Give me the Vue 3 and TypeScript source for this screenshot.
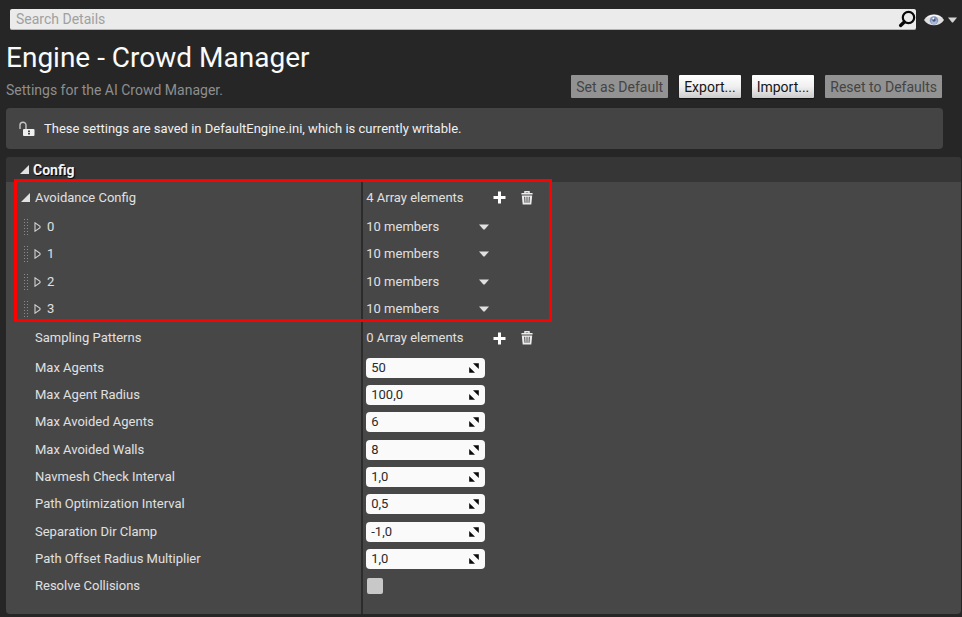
<script setup lang="ts">
import { ref } from 'vue'

interface NumberSetting {
  id: string
  label: string
  value: string
}

const search = ref('')
const members = ref<string[]>(['0', '1', '2', '3'])
const resolveCollisions = ref(false)

const settings = ref<NumberSetting[]>([
  { id: 'max-agents', label: 'Max Agents', value: '50' },
  { id: 'max-agent-radius', label: 'Max Agent Radius', value: '100,0' },
  { id: 'max-avoided-agents', label: 'Max Avoided Agents', value: '6' },
  { id: 'max-avoided-walls', label: 'Max Avoided Walls', value: '8' },
  { id: 'navmesh-check', label: 'Navmesh Check Interval', value: '1,0' },
  { id: 'path-optimization', label: 'Path Optimization Interval', value: '0,5' },
  { id: 'separation-clamp', label: 'Separation Dir Clamp', value: '-1,0' },
  { id: 'path-offset', label: 'Path Offset Radius Multiplier', value: '1,0' },
])
</script>

<template>
  <main class="page">
    <div class="toolbar">
      <div class="search">
        <input v-model="search" type="text" placeholder="Search Details" aria-label="Search Details" />
        <svg class="search-icon" width="18" height="18" viewBox="0 0 18 18" aria-hidden="true">
          <circle cx="10.5" cy="7.5" r="5.7" fill="none" stroke="#080808" stroke-width="2.2" />
          <path d="M6.3 12 2.6 15.4" stroke="#080808" stroke-width="3.4" stroke-linecap="round" />
        </svg>
      </div>
      <button class="view" type="button" aria-label="View options">
        <svg width="20" height="14" viewBox="0 0 20 14" aria-hidden="true">
          <path d="M0 7C4 -.2 16 -.2 20 7 16 14 4 14 0 7Z" fill="#dedede" />
          <path d="M2 5.4C6 .4 14 .4 18 5.4 13 2.8 7 2.8 2 5.4Z" fill="#f8f8f8" />
          <circle cx="10" cy="7.4" r="4.2" fill="#8294bd" />
          <circle cx="10" cy="8.6" r="2.8" fill="#a9b9db" />
          <circle cx="10" cy="7" r="1.7" fill="#46567f" />
          <circle cx="9.4" cy="5.4" r="1" fill="#fff" />
        </svg>
        <svg width="9" height="6" viewBox="0 0 9 6" aria-hidden="true">
          <path d="M0 .5h9L5 5.4H4Z" fill="#d4d4d4" />
        </svg>
      </button>
    </div>

    <header class="heading">
      <div class="titles">
        <h1>Engine - Crowd Manager</h1>
        <p>Settings for the AI Crowd Manager.</p>
      </div>
      <div class="actions">
        <button type="button" disabled>Set as Default</button>
        <button type="button">Export...</button>
        <button type="button">Import...</button>
        <button type="button" disabled>Reset to Defaults</button>
      </div>
    </header>

    <div class="notice">
      <svg width="16" height="16" viewBox="0 0 16 16" aria-hidden="true">
        <path d="M1 8V4.2a3 3 0 0 1 6 0V8" fill="none" stroke="#c4c4c4" stroke-width="1.4" />
        <rect x="4" y="8" width="11.5" height="7" rx="1" fill="#f0f0f0" />
        <path d="M9 9.4h2v1.5H9zM9 11.8h2v1.6H9z" fill="#444" />
      </svg>
      <span>These settings are saved in DefaultEngine.ini, which is currently writable.</span>
    </div>

    <section class="panel">
      <h2>
        <button class="section-toggle" type="button" aria-expanded="true">
          <svg width="9" height="9" viewBox="0 0 9 9" aria-hidden="true">
            <path d="M9 0v9H0Z" fill="#e2e2e2" />
          </svg>
          Config
        </button>
      </h2>

      <div class="rows">
        <div class="group">
          <div class="row array">
            <div class="name">
              <button class="toggle" type="button" aria-label="Collapse Avoidance Config">
                <svg width="9" height="9" viewBox="0 0 9 9" aria-hidden="true">
                  <path d="M9 0v9H0Z" fill="#e2e2e2" />
                </svg>
              </button>
              <span>Avoidance Config</span>
            </div>
            <div class="value">
              <span class="count">4 Array elements</span>
              <button class="icon" type="button" aria-label="Add element">
                <svg width="13" height="13" viewBox="0 0 13 13" aria-hidden="true">
                  <path d="M5 .5h3V5h4.5v3H8v4.5H5V8H.5V5H5Z" fill="#fff" />
                </svg>
              </button>
              <button class="icon" type="button" aria-label="Remove all elements">
                <svg width="12" height="14" viewBox="0 0 12 14" aria-hidden="true">
                  <path d="M.4 2.8H11.6M4 2.4V.8h4v1.6" fill="none" stroke="#ececec" stroke-width="1.5" />
                  <path d="M.8 4.5h10.4l-.9 9H1.7Z" fill="#ececec" />
                  <path d="M3.7 5.8l.3 6M6 5.8v6M8.3 5.8l-.3 6" stroke="#484848" stroke-width="1" />
                </svg>
              </button>
            </div>
          </div>

          <div v-for="item in members" :key="item" class="row">
            <div class="name element">
              <svg class="grip" width="6" height="16" viewBox="0 0 6 16" aria-hidden="true">
                <path
                  d="M1.5 0v16M4.5 0v16"
                  stroke="#8c8c8c"
                  stroke-width="1"
                  stroke-dasharray="1 2"
                />
              </svg>
              <button class="toggle" type="button" :aria-label="'Expand element ' + item">
                <svg width="7" height="10" viewBox="0 0 7 10" aria-hidden="true">
                  <path d="M1 .8V9.2L6 5.8V4.2Z" fill="none" stroke="#cfcfcf" stroke-width="1.1" />
                </svg>
              </button>
              <span>{{ item }}</span>
            </div>
            <div class="value">
              <span class="count">10 members</span>
              <button class="menu" type="button" :aria-label="'Options for element ' + item">
                <svg width="10" height="6" viewBox="0 0 10 6" aria-hidden="true">
                  <path d="M0 .5h10L5.6 5.4h-1.2Z" fill="#e0e0e0" />
                </svg>
              </button>
            </div>
          </div>
          <div class="highlight"></div>
        </div>

        <div class="row array">
          <div class="name"><span class="plain">Sampling Patterns</span></div>
          <div class="value">
            <span class="count">0 Array elements</span>
            <button class="icon" type="button" aria-label="Add element">
              <svg width="13" height="13" viewBox="0 0 13 13" aria-hidden="true">
                <path d="M5 .5h3V5h4.5v3H8v4.5H5V8H.5V5H5Z" fill="#fff" />
              </svg>
            </button>
            <button class="icon" type="button" aria-label="Remove all elements">
              <svg width="12" height="14" viewBox="0 0 12 14" aria-hidden="true">
                <path d="M.4 2.8H11.6M4 2.4V.8h4v1.6" fill="none" stroke="#ececec" stroke-width="1.5" />
                <path d="M.8 4.5h10.4l-.9 9H1.7Z" fill="#ececec" />
                <path d="M3.7 5.8l.3 6M6 5.8v6M8.3 5.8l-.3 6" stroke="#484848" stroke-width="1" />
              </svg>
            </button>
          </div>
        </div>

        <div v-for="setting in settings" :key="setting.id" class="row">
          <div class="name">
            <label class="plain" :for="setting.id">{{ setting.label }}</label>
          </div>
          <div class="value">
            <div class="field">
              <input :id="setting.id" v-model="setting.value" type="text" inputmode="decimal" />
              <svg width="10" height="10" viewBox="0 0 10 10" aria-hidden="true">
                <path d="M4 .2h5.8V6Z" fill="#0a0a0a" />
                <path d="M.2 4v5.8H6Z" fill="#0a0a0a" />
              </svg>
            </div>
          </div>
        </div>

        <div class="row">
          <div class="name"><label class="plain" for="resolve">Resolve Collisions</label></div>
          <div class="value">
            <input id="resolve" v-model="resolveCollisions" class="check" type="checkbox" />
          </div>
        </div>
        <div class="row tail">
          <div class="name"></div>
          <div class="value"></div>
        </div>
      </div>
    </section>
  </main>
</template>

<style>
body {
  background: #262626;
}
</style>

<style scoped>
.page {
  display: flex;
  flex-direction: column;
  box-sizing: border-box;
  min-height: 100vh;
  padding: 9px 1px 3px 6px;
  background: #262626;
  color: #e0e0e0;
  font-family: Roboto, "Liberation Sans", sans-serif;
  font-size: 13px;
  line-height: 16px;
}

button,
input {
  margin: 0;
  font: inherit;
}

button {
  padding: 0;
  border: 0;
  background: none;
  color: inherit;
}

svg {
  display: block;
  flex: none;
}

.toolbar {
  display: flex;
  align-items: center;
  gap: 8px;
  padding: 0 4px;
}

.search {
  display: flex;
  flex: 1;
  align-items: center;
  height: 21px;
  box-sizing: border-box;
  border-bottom: 1px solid #b4b4b4;
  border-radius: 2px;
  background: #ebebeb;
}

.search input {
  flex: 1;
  min-width: 0;
  padding: 0 6px;
  border: 0;
  outline: 0;
  background: none;
  color: #222;
  font-size: 14px;
}

.search input::placeholder {
  color: #a0a0a0;
  opacity: 1;
}

.view {
  display: flex;
  align-items: center;
  gap: 4px;
}

.heading {
  display: flex;
  align-items: flex-end;
  justify-content: space-between;
  margin-top: 10px;
  padding-right: 19px;
}

h1,
h2,
p {
  margin: 0;
  font-weight: 400;
}

h1 {
  color: #fafafa;
  font-size: 28px;
  line-height: 36px;
}

.titles p {
  padding-top: 6px;
  color: #8e8e8e;
  font-size: 14px;
}

.actions {
  display: flex;
  gap: 11px;
}

.actions button {
  height: 23px;
  padding: 0 5px;
  border-radius: 1px;
  background: linear-gradient(#fff, #f0f0f0 50%, #cbcbcb);
  color: #151515;
  font-size: 14px;
  box-shadow: 0 1px 1px #111;
}

.actions button:disabled {
  background: #929292;
  color: #444;
  box-shadow: none;
}

.notice {
  display: flex;
  align-items: center;
  gap: 9px;
  height: 41px;
  margin: 10px 18px 0 0;
  padding: 0 13px;
  box-sizing: border-box;
  border-radius: 4px;
  background: #444;
  color: #f0f0f0;
}

.panel {
  display: flex;
  flex: 1;
  flex-direction: column;
  margin-top: 8px;
  border-radius: 4px;
  background: #474747;
}

h2 {
  border-radius: 4px 4px 0 0;
  background: #363636;
}

.section-toggle {
  display: flex;
  align-items: center;
  gap: 4px;
  height: 25px;
  padding: 0 14px;
  color: #f4f4f4;
  font-size: 14px;
  font-weight: 700;
  text-shadow: 1px 1px 1px #000;
}

.rows {
  display: flex;
  flex: 1;
  flex-direction: column;
}

.group {
  position: relative;
  display: flex;
  flex: 5 0 auto;
  flex-direction: column;
}

.highlight {
  position: absolute;
  top: -3px;
  bottom: 1px;
  left: 8px;
  width: 532px;
  border: 3px solid #f00;
  pointer-events: none;
}

.row {
  display: grid;
  flex: 1 0 27px;
  grid-template-columns: 37.2% 1fr;
}

.row.array {
  flex-basis: 31px;
}

.row.tail {
  flex: 0 0 14px;
}

.name,
.value {
  display: flex;
  align-items: center;
}

.name {
  gap: 5px;
  padding-left: 15px;
}

.name.element {
  padding-left: 17px;
}

.name.element span {
  padding-left: 1px;
}

.plain {
  padding-left: 14px;
}

.value {
  padding-left: 3px;
  border-left: 2px solid #2c2c2c;
}

.count {
  width: 113px;
}

.icon {
  display: flex;
  justify-content: center;
  width: 28px;
}

.array .count {
  width: 119px;
}

.field {
  display: flex;
  align-items: center;
  width: 119px;
  height: 20px;
  padding: 0 6px 0 5px;
  box-sizing: border-box;
  border-radius: 4px;
  background: #fafafa;
}

.field input {
  flex: 1;
  min-width: 0;
  padding: 0;
  border: 0;
  outline: 0;
  background: none;
  color: #2a2a2a;
}

.check {
  width: 16px;
  height: 16px;
  margin-left: 1px;
  appearance: none;
  border-radius: 2px;
  background: #c8c8c8;
}

.check:checked {
  background: #e8962e;
}
</style>
